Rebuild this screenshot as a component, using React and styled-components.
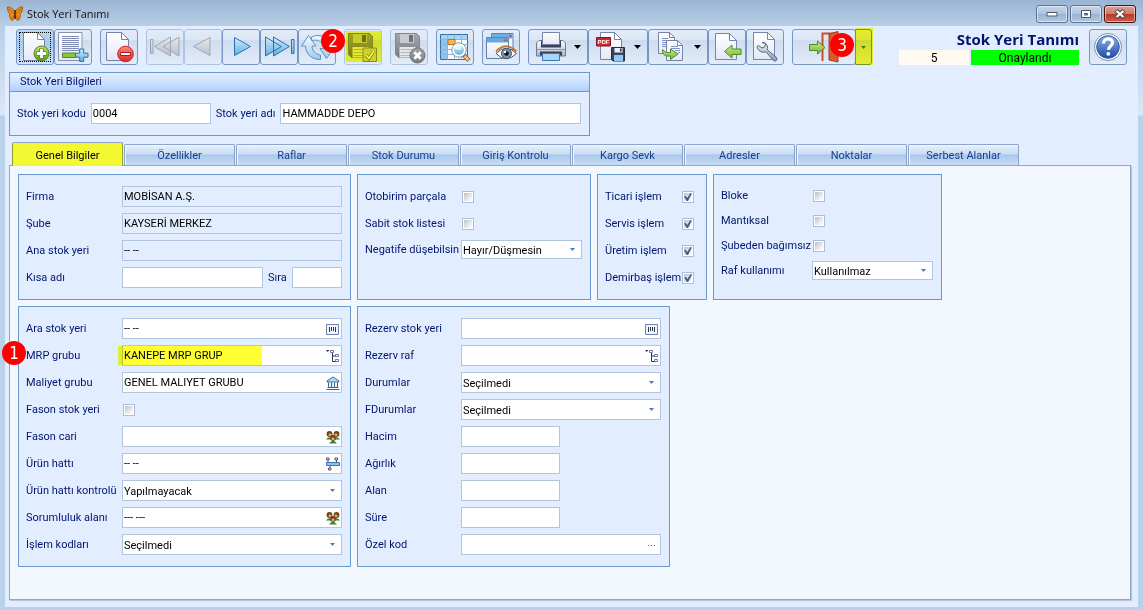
import { useId, useState } from 'react';

import styled, { createGlobalStyle, css } from 'styled-components';

const GlobalStyle = createGlobalStyle`
  * {
    box-sizing: border-box;
  }

  body {
    margin: 0;
    background: #bad1ea;
    color: #000;
    font-family: Roboto, 'DejaVu Sans Condensed', sans-serif;
    font-size: 11px;
    line-height: 14px;
  }

  button,
  input,
  select {
    margin: 0;
    color: inherit;
    font: inherit;
  }
`;

const Window = styled.div`
  display: flex;
  flex-direction: column;
  min-height: 100vh;
  padding: 0 5px 3px;
  background: linear-gradient(#9ab4d2 0, #b9cfe7 26px, #dae7f5 115px, #bad1ea 116px);
`;

const TitleBar = styled.header`
  display: flex;
  align-items: center;
  height: 26px;
  gap: 4px;
  padding: 2px 2px 0;
  color: #101010;
  font-family: 'Open Sans', 'Noto Sans', sans-serif;
`;

const WindowButtons = styled.div`
  display: flex;
  gap: 2px;
  margin-left: auto;
`;

const WindowButton = styled.button`
  display: flex;
  align-items: center;
  justify-content: center;
  width: 32px;
  height: 18px;
  padding: 0;
  border: 1px solid ${(p) => (p.$close ? '#4a1513' : '#5c7391')};
  border-radius: 3px;
  background: ${(p) =>
    p.$close
      ? 'linear-gradient(#dba298 0, #cf7a6c 48%, #b53822 50%, #c8604c 100%)'
      : 'linear-gradient(#c2d4e8 0, #b0c6df 48%, #98b2cf 50%, #b3c9e2 100%)'};
  box-shadow: inset 0 0 0 1px #ffffff80;
`;

const Client = styled.main`
  display: flex;
  flex: 1;
  flex-direction: column;
  align-items: flex-start;
  padding: 3px 7px 7px 4px;
  background: #e2eeff;
`;

const Toolbar = styled.div`
  display: flex;
  align-self: stretch;
  gap: 8px;
  padding: 0 4px 0 7px;
`;

const ToolGroup = styled.div`
  position: relative;
  display: flex;
`;

const ToolButton = styled.button`
  display: flex;
  align-items: center;
  height: 36px;
  padding: 0;
  border: 1px solid #7896c3;
  border-radius: 3px;
  background: linear-gradient(#e3ecf8 0, #dce7f5 28%, #cddcf0 30%, #d9e5f5 70%, #e2edfb 100%);

  svg {
    display: block;
  }

  ${(p) =>
    p.$active &&
    css`
      background: linear-gradient(#bcd6f3, #a9cbee 40%, #cfe2f7);
      outline: 1px dotted #000;
      outline-offset: -4px;
    `}

  &:disabled {
    border-color: #afc3df;
  }
`;

const MenuToolButton = styled(ToolButton)`
  padding-right: 6px;
`;

const SplitButton = styled(ToolButton)`
  justify-content: center;
  width: 17px;
  margin-left: -1px;
  border-radius: 0 3px 3px 0;
`;

const Marker = styled.span`
  position: absolute;
  z-index: 2;
  top: ${(p) => p.$top}px;
  left: ${(p) => p.$left}px;
  width: 24px;
  height: 24px;
  border-radius: 50%;
  background: #fe0000;
  color: #fff;
  font-family: 'DejaVu Sans Condensed', 'DejaVu Sans', sans-serif;
  font-size: 17px;
  line-height: 24px;
  text-align: center;
`;

const Highlight = styled.span`
  position: absolute;
  z-index: 1;
  inset: ${(p) => p.$inset};
  background: #ffff33;
  mix-blend-mode: multiply;
  pointer-events: none;
`;

const Status = styled.div`
  display: grid;
  grid-template-columns: 70px 108px;
  gap: 0 2px;
  margin-left: auto;
  margin-right: 2px;
  font-size: 12px;
  text-align: center;

  h1 {
    grid-column: 1 / -1;
    margin: 0;
    color: #00146e;
    font-family: 'Open Sans', 'Noto Sans', sans-serif;
    font-size: 15px;
    line-height: 21px;
    text-align: right;
  }
`;

const StatusCell = styled.span`
  height: 15px;
  background: ${(p) => p.$color};
  line-height: 16px;
`;

const InfoBox = styled.section`
  width: 581px;
  max-width: 100%;
  margin-top: 7px;
  border: 1px solid #6a98d0;

  h2 {
    margin: 0;
    padding: 0 10px;
    border-bottom: 1px solid #6a98d0;
    background: linear-gradient(#e4efff, #cde1ff 50%, #b0d0fc);
    color: #00146e;
    font-size: 11px;
    font-weight: normal;
    line-height: 18px;
  }
`;

const InfoRow = styled.div`
  display: flex;
  gap: 5px;
  padding: 11px 8px 11px 7px;
  color: #00146e;
  line-height: 21px;

  input {
    flex: 1;
  }

  input:first-of-type {
    flex: 0 0 120px;
  }
`;

const Tabs = styled.div`
  display: flex;
  align-items: flex-end;
  gap: 1px;
  height: 23px;
  margin-top: 6px;
  padding: 0 3px;
`;

const Tab = styled.button`
  position: relative;
  width: 111px;
  height: 21px;
  padding: 2px 0 0;
  border: 1px solid #8da3cb;
  border-bottom: 0;
  border-radius: 2px 2px 0 0;
  background: linear-gradient(#e8f1fc 0, #c9ddf5 45%, #a9c7ec 50%, #c8ddf6 100%);
  box-shadow: inset 1px 1px 0 #f2f7fe;
  color: #153f8c;
  line-height: 16px;

  ${(p) =>
    p.$selected &&
    css`
      height: 24px;
      margin-bottom: -1px;
      background: #f4f8fe;
      color: #000;
    `}
`;

const TabPage = styled.div`
  display: flex;
  flex: 1;
  flex-direction: column;
  align-self: stretch;
  gap: 6px;
  padding: 8px;
  border: 1px solid #90a5cb;
  background: #f3f8ff;
  box-shadow: 1px 1px 1px #b9c6dd;
`;

const PanelRow = styled.div`
  display: flex;
  gap: 6px;
`;

const Panel = styled.section`
  display: flex;
  flex: 0 1 ${(p) => p.$width}px;
  flex-direction: column;
  gap: 6px;
  min-width: 0;
  padding: 11px 8px 11px 7px;
  border: 1px solid #6a98d0;
  background: #e2eeff;
`;

const Row = styled.div`
  position: relative;
  display: flex;
  align-items: center;
  height: ${(p) => (p.$compact ? 19 : 21)}px;
`;

const Label = styled.label`
  flex: 0 0 ${(p) => p.$width}px;
  color: #00146e;
  white-space: nowrap;
`;

const SideLabel = styled(Label)`
  margin-left: 5px;
`;

const Control = styled.div`
  display: flex;
  align-items: center;
  flex: ${(p) => (p.$width ? `0 0 ${p.$width}px` : '1')};
  min-width: 0;
  height: 100%;
  border: 1px solid #b2c5e0;
  background: ${(p) => (p.$readOnly ? 'transparent' : '#fff')};

  input {
    flex: 1;
    min-width: 0;
    height: 100%;
    padding: 0 0 1px 1px;
    border: 0;
    outline: 0;
    background: none;
  }
`;

const TextInput = styled.input`
  min-width: 0;
  height: 21px;
  padding: 0 1px 1px;
  border: 1px solid #b2c5e0;
  background: #fff;
  color: #000;
`;

const LookupButton = styled.button`
  width: 14px;
  height: 14px;
  margin-right: 1px;
  padding: 0;
  border: 0;
  background: none;

  svg {
    display: block;
  }
`;

const SelectBox = styled.div`
  position: relative;
  flex: 1;
  min-width: 0;
  height: 100%;

  select {
    width: 100%;
    height: 100%;
    padding: 2px 18px 0 1px;
    border: 1px solid #b2c5e0;
    border-radius: 0;
    appearance: none;
    background: #fff;
  }

  svg {
    position: absolute;
    top: 50%;
    right: 7px;
    margin-top: -2px;
    pointer-events: none;
  }
`;

const CheckBox = styled.input.attrs({ type: 'checkbox' })`
  display: grid;
  width: 12px;
  height: 12px;
  margin: 1px 1px 0;
  padding: 1px;
  border: 1px solid #a9bfde;
  appearance: none;
  background: linear-gradient(135deg, #bcc1c8, #f7f7f8 80%) content-box, #fff;

  &:checked::after {
    content: '';
    width: 8px;
    height: 8px;
    background: #3e5f94;
    clip-path: polygon(0 45%, 22% 36%, 40% 62%, 78% 4%, 100% 4%, 50% 100%, 34% 100%);
  }
`;

const HiddenDefs = styled.svg`
  position: absolute;
`;

const Caret = ({ small }) => (
  <svg width={small ? 5 : 7} height={small ? 3 : 4} viewBox="0 0 7 4" aria-hidden="true">
    <path d="M0 0h7L3.5 4z" fill={small ? '#4c7ab8' : '#000'} />
  </svg>
);

const gradients = [
  ['gPage', '#ffffff', '#e3e8f5'],
  ['gBlue', '#d3edfb', '#5eaee0'],
  ['gPale', '#f3fafe', '#9ccbec'],
  ['gGrey', '#e6e8ec', '#b9bec9'],
  ['gGreen', '#c4e36a', '#5b9b1e'],
  ['gArrow', '#c9ec86', '#6fb53c'],
  ['gRed', '#ff8a80', '#e02323'],
  ['gHelp', '#8fb4ea', '#1d4aa3'],
  ['gSteel', '#eef1f7', '#8d99b3'],
  ['gPrinter', '#ffffff', '#a9b4cc'],
  ['gDark', '#a3a6ab', '#787b81'],
];

const Gradients = () => (
  <HiddenDefs width="0" height="0" aria-hidden="true">
    <defs>
      {gradients.map(([id, from, to]) => (
        <linearGradient key={id} id={id} x1="0" y1="0" x2="0" y2="1">
          <stop offset="0" stopColor={from} />
          <stop offset="1" stopColor={to} />
        </linearGradient>
      ))}
    </defs>
  </HiddenDefs>
);

// Toolbar drawings use the outer corner of their 38x36 button as origin.
const Icon = ({ width = 36, children }) => (
  <svg width={width} height="34" viewBox={`1 1 ${width} 34`} fill="none" aria-hidden="true">
    {children}
  </svg>
);

const Page = ({ x, y, w, h, fold = 7 }) => (
  <>
    <path
      d={`M${x} ${y}h${w - fold}l${fold} ${fold}v${h - fold}h${-w}z`}
      fill="url(#gPage)"
      stroke="#7782ad"
    />
    <path d={`M${x + w - fold} ${y}v${fold}h${fold}z`} fill="#fff" stroke="#7782ad" />
  </>
);

const Floppy = ({ x, y }) => (
  <g transform={`translate(${x} ${y})`}>
    <path d="M0 0h21l3 3v21H3l-3-3z" fill="url(#gDark)" stroke="#83868c" />
    <path d="M4.5.5h14v9h-14z" fill="#c9cbd0" />
    <path d="M13.5 1.5h4v7h-4z" fill="#6d7076" />
    <path d="M4 13.5h16V24H4z" fill="#e4e6ea" />
    <path d="M5 16h14M5 19h14M5 22h14" stroke="#b4b7bd" />
  </g>
);

const icons = {
  add: (
    <Icon>
      <Page x={7.5} y={3.5} w={21} h={28} />
      <circle cx="25.5" cy="24.5" r="7.5" fill="url(#gGreen)" stroke="#4f8420" />
      <path d="M25.5 19.5v10M20.5 24.5h10" stroke="#4f8420" strokeWidth="4.5" />
      <path d="M25.5 20v9M21 24.5h9" stroke="#fff" strokeWidth="2.8" />
    </Icon>
  ),
  addLine: (
    <Icon>
      <path d="M4.5 3.5h23.5v28H4.5z" fill="url(#gPage)" stroke="#8791b5" />
      <path
        d="M8 7.5h17M8 9.5h17M8 11.5h17M8 13.5h17M8 15.5h17M8 17.5h17M8 19.5h17M8 21.5h17"
        stroke="#7f8bb2"
      />
      <path d="M8.5 24h13v4.5h-13z" fill="#8cc63a" stroke="#55892a" />
      <path
        d="M25.7 20h4v4.2h4.3v4h-4.3v4.2h-4v-4.2h-4.2v-4h4.2z"
        fill="url(#gBlue)"
        stroke="#2d6ea8"
      />
    </Icon>
  ),
  remove: (
    <Icon>
      <Page x={6.5} y={3.5} w={22} h={28} />
      <circle cx="25.5" cy="25" r="7.8" fill="url(#gRed)" stroke="#c42424" />
      <path d="M20.5 23.5h10v3h-10z" fill="#fff" stroke="#b01818" />
    </Icon>
  ),
  first: (
    <Icon>
      <path
        d="M4.5 10.5H7v14H4.5zM24.5 8v19l-16-9.5zM33 8v19l-16-9.5z"
        fill="url(#gGrey)"
        stroke="#9da5b5"
      />
    </Icon>
  ),
  previous: (
    <Icon>
      <path d="M26 8.5v18l-16.5-9z" fill="url(#gGrey)" stroke="#9da5b5" />
    </Icon>
  ),
  next: (
    <Icon>
      <path d="M12.5 8.5v18l16-9z" fill="url(#gBlue)" stroke="#2c6fae" />
    </Icon>
  ),
  last: (
    <Icon>
      <path
        d="M31.5 10.5H34v14h-2.5zM5.5 8v19l16-9.5zM13.5 8v19l16-9.5z"
        fill="url(#gBlue)"
        stroke="#2c6fae"
      />
    </Icon>
  ),
  refresh: (
    <Icon>
      <path
        d="M10.5 6.5L18 17h-4c.2 5 3 8 8.5 9v4.5C13 30.5 8 25 7.500 17h-4z"
        fill="url(#gPale)"
        stroke="#5c93c6"
      />
      <path
        d="M13.500 8C22 4 31.500 8 32 19.500h3.500L28.500 29.500 22 19.500h3.500c0-6-4-9.500-12-8z"
        fill="url(#gPale)"
        stroke="#5c93c6"
      />
    </Icon>
  ),
  save: (
    <Icon>
      <Floppy x={4.5} y={4.5} />
      <path d="M19 19h13.5v13.5H19z" fill="#cfd0d2" stroke="#8b8d92" />
      <path d="M22 26l3 3.5 5-8" stroke="#808287" strokeWidth="3.2" />
      <path d="M22 26l3 3.5 5-8" stroke="#fff" strokeWidth="1.6" />
    </Icon>
  ),
  saveClose: (
    <Icon>
      <Floppy x={5.5} y={4.5} />
      <circle cx="27.5" cy="26.5" r="7.5" fill="url(#gDark)" stroke="#6d7076" />
      <path d="M24.3 23.3l6.4 6.4M30.7 23.3l-6.4 6.4" stroke="#fff" strokeWidth="2.8" />
    </Icon>
  ),
  gridSearch: (
    <Icon>
      <path d="M4.5 5.5h27v25h-27z" fill="#f7fbff" stroke="#336ea5" />
      <path d="M5 6h6v24H5z" fill="#8fc4ec" />
      <path d="M5 6h26v4.5H5z" fill="#a9d3f2" />
      <path
        d="M4.5 10.5h27M4.5 15.5h27M4.5 20.5h27M4.5 25.5h27M11.5 5.5v25M18.5 5.5v25M25.5 5.5v25"
        stroke="#8fb4d9"
      />
      <path d="M12 10.5h7v5h-7z" fill="#fbb94c" stroke="#b9701c" />
      <path d="M27.5 26l5.5 5.5" stroke="#8f6a3a" strokeWidth="4.5" />
      <path d="M28.5 27l4 4" stroke="#f0c08a" strokeWidth="2.5" />
      <circle cx="23" cy="21" r="6" fill="url(#gBlue)" stroke="#fff" strokeWidth="2" />
      <circle cx="23" cy="21" r="7.2" stroke="#8894b0" />
      <ellipse cx="22" cy="18.5" rx="3.5" ry="2.5" fill="#fff" opacity=".7" />
    </Icon>
  ),
  preview: (
    <Icon>
      <path d="M9.5 4.5H31v16H9.5z" fill="#f2f6fd" stroke="#5f82b5" />
      <path d="M10 5h20.5v4.5H10z" fill="#6fb0e4" />
      <path d="M4.5 8.5h22v21h-22z" fill="url(#gPage)" stroke="#5f82b5" />
      <path d="M5 9h21v4.5H5z" fill="#64a9e0" />
      <path d="M27.5 6h2v2h-2zM22.5 10.3h2v2h-2z" fill="#e23b3b" />
      <path d="M14 24.5Q24 14 34.5 24.5 24 35 14 24.5z" fill="#fff" stroke="#57504d" />
      <circle cx="24.5" cy="24.5" r="5" fill="#7d93ad" stroke="#46566b" />
      <circle cx="24.5" cy="24.5" r="2.3" fill="#111" />
      <circle cx="23" cy="23" r="1.2" fill="#fff" />
      <path d="M14 22.5Q24 12 34.5 22.5" stroke="#bb7a43" strokeWidth="1.8" />
    </Icon>
  ),
  print: (
    <Icon width={45}>
      <path d="M8.5 14l2.5-2.5h24l2.5 2.5v13h-29z" fill="url(#gPrinter)" stroke="#6b789a" />
      <path d="M13 11.5h20v7H13z" fill="#3b4257" />
      <path d="M14.5 3.5h17v12h-17z" fill="url(#gPage)" stroke="#7782ad" />
      <path d="M9 20.5h28" stroke="#8b96b3" />
      <path d="M12 22.5h22v4H12z" fill="#3b4257" />
      <path d="M14.5 24.5h17v7h-17z" fill="#a8d5f5" stroke="#3779b5" />
    </Icon>
  ),
  pdf: (
    <Icon width={45}>
      <Page x={12.5} y={3.5} w={21} h={27} />
      <path d="M8.5 8.5h14V17h-14z" fill="#d3252c" stroke="#8e1319" />
      <text
        x="15.5"
        y="15"
        fill="#fff"
        fontFamily="Liberation Sans, sans-serif"
        fontSize="6"
        fontWeight="bold"
        textAnchor="middle"
      >
        PDF
      </text>
      <path d="M23.5 18.5h13V32H25l-1.5-1.5z" fill="#39445e" stroke="#222b42" />
      <path d="M26.5 19h8v4.5h-8z" fill="#e9edf5" />
      <path d="M32 19.5h1.5v3H32z" fill="#222b42" />
      <path d="M26 26h9v6h-9z" fill="#8fcaf3" />
    </Icon>
  ),
  copy: (
    <Icon width={45}>
      <Page x={10.5} y={3.5} w={16} h={21} fold={5} />
      <path d="M14 9.5h6M14 11.5h6M14 13.5h6M14 15.5h6M14 17.5h6" stroke="#7e93c4" />
      <Page x={18.5} y={11.5} w={16} h={20} fold={5} />
      <path d="M23 17.5h7M23 19.5h9M27 21.5h5M30 23.5h2" stroke="#7e93c4" />
      <path
        d="M14.5 20.5c0 6 3 7 8 6.5v3.5l7.5-5.500-7.500-5v3.500c-4 .5-6-.5-8-3z"
        fill="url(#gArrow)"
        stroke="#4f8a22"
      />
    </Icon>
  ),
  load: (
    <Icon>
      <Page x={7.5} y={4.5} w={21} h={26} />
      <path d="M16.5 22.5L24 16v4h9v5.5h-9V29z" fill="url(#gArrow)" stroke="#4f8a22" />
    </Icon>
  ),
  settings: (
    <Icon>
      <Page x={7.5} y={3.5} w={21} h={27} />
      <path
        d="M16 13.5c4 0 6.5 3.5 5.2 7.3l9.3 7.7c1.5 2.5-1 4.5-3 3L20 22.800c-4 1.500-8.500-1-9-5.300l1.500-1 3.500 2.500 3-1.500.5-3z"
        fill="url(#gSteel)"
        stroke="#57627f"
      />
    </Icon>
  ),
  exit: (
    <Icon width={62}>
      <path d="M30.5 32V4.5H44" stroke="#c9502b" strokeWidth="2" />
      <path d="M37 5l9-2.5V33l-9-2z" fill="#d95a30" stroke="#a83c1b" />
      <path
        d="M17.5 15.5h8V12l7.5 6.5-7.5 6.5v-3.5h-8z"
        fill="url(#gArrow)"
        stroke="#4f8a22"
      />
    </Icon>
  ),
  help: (
    <Icon>
      <circle cx="19" cy="18" r="13.5" fill="#fff" stroke="#7c8cad" />
      <circle cx="19" cy="18" r="11.3" fill="url(#gHelp)" stroke="#2e57a6" />
      <path d="M14.5 14.5c0-6 9-6 9-.8 0 3.300-4 3.300-4 7" stroke="#fff" strokeWidth="3.2" />
      <circle cx="19.3" cy="24.8" r="1.9" fill="#fff" />
    </Icon>
  ),
};

const SmallIcon = ({ children }) => (
  <svg width="14" height="14" viewBox="0 0 14 14" fill="none" aria-hidden="true">
    {children}
  </svg>
);

const lookupIcons = {
  barcode: (
    <SmallIcon>
      <path d="M.5 2.5h12v10H.5z" fill="#f4f6fc" stroke="#6f7fae" />
      <path d="M3.5 5v5M5.5 5v4M7.5 5v4M9.5 5v5" stroke="#2c3450" />
    </SmallIcon>
  ),
  tree: (
    <SmallIcon>
      <path d="M0 1h3.5L1.7 3z" fill="#2c3450" />
      <path d="M6.5 4v8.5H10M6.5 7H10" stroke="#2c3450" />
      <path d="M4.500 1.500h3v2h-3zM9.500 5.500h3v2h-3zM9.500 10.500h3v2h-3z" fill="#fff" stroke="#6878a8" />
    </SmallIcon>
  ),
  bank: (
    <SmallIcon>
      <path d="M7 1l6 4v1H1V5z" fill="#bcd8f0" stroke="#356a9c" />
      <path d="M2.5 6.5v5M5.5 6.5v5M8.5 6.5v5M11.5 6.5v5" stroke="#356a9c" />
      <path d="M4 6.5v5M7 6.5v5M10 6.5v5" stroke="#d6e7f6" />
      <path d="M1.5 11.5h11M.5 13.5h13" stroke="#356a9c" />
    </SmallIcon>
  ),
  people: (
    <SmallIcon>
      <path d="M0 9.5Q3.5 5 7 9.5zM7 9.5Q10.5 5 14 9.5z" fill="#2f8a2c" />
      <circle cx="3.5" cy="4" r="2.9" fill="#6d4318" />
      <circle cx="10.5" cy="4" r="2.9" fill="#6d4318" />
      <circle cx="4" cy="4.7" r="1.5" fill="#dfab70" />
      <circle cx="10" cy="4.7" r="1.5" fill="#dfab70" />
      <path d="M3 13.5Q7 8 11 13.5z" fill="#2f8a2c" />
      <circle cx="7" cy="8" r="2.9" fill="#6d4318" />
      <circle cx="7" cy="8.8" r="1.5" fill="#dfab70" />
    </SmallIcon>
  ),
  conveyor: (
    <SmallIcon>
      <path d="M.5 5.5h13v3H.5z" fill="#8cc4ee" stroke="#3a76b0" />
      <path d="M2 3v2.5M10.500 3v2.500M4 8.500V11" stroke="#4b5676" />
      <path d="M.5 1H3v2H.5zM9 1h2.500v2H9zM2.500 11H5v2H2.500z" fill="#fff" stroke="#4b5676" />
    </SmallIcon>
  ),
  dots: (
    <SmallIcon>
      <path d="M3 7.5h1M6 7.5h1M9 7.5h1" stroke="#3f70ad" />
    </SmallIcon>
  ),
};

const TextRow = ({ label, value = '', icon, readOnly, width, labelWidth = 96, children }) => {
  const id = useId();

  return (
    <Row>
      <Label htmlFor={id} $width={labelWidth}>
        {label}
      </Label>
      <Control $readOnly={readOnly} $width={width}>
        <input id={id} type="text" defaultValue={value} readOnly={readOnly} />
        {icon && (
          <LookupButton type="button" aria-label={label}>
            {lookupIcons[icon]}
          </LookupButton>
        )}
      </Control>
      {children}
    </Row>
  );
};

const SelectRow = ({ label, value, labelWidth = 96, compact }) => {
  const id = useId();

  return (
    <Row $compact={compact}>
      <Label htmlFor={id} $width={labelWidth}>
        {label}
      </Label>
      <SelectBox>
        <select id={id} defaultValue={value}>
          <option>{value}</option>
        </select>
        <Caret small />
      </SelectBox>
    </Row>
  );
};

const CheckRow = ({ label, checked = false, labelWidth = 96, compact }) => {
  const id = useId();

  return (
    <Row $compact={compact}>
      <Label htmlFor={id} $width={labelWidth}>
        {label}
      </Label>
      <CheckBox id={id} defaultChecked={checked} />
    </Row>
  );
};

const Tool = ({ icon, label, menu, ...rest }) => {
  const Button = menu ? MenuToolButton : ToolButton;

  return (
    <Button type="button" aria-label={label} {...rest}>
      {icons[icon]}
      {menu && <Caret />}
    </Button>
  );
};

const tabNames = [
  'Genel Bilgiler',
  'Özellikler',
  'Raflar',
  'Stok Durumu',
  'Giriş Kontrolu',
  'Kargo Sevk',
  'Adresler',
  'Noktalar',
  'Serbest Alanlar',
];

const App = () => {
  const [tab, setTab] = useState(tabNames[0]);

  return (
    <Window>
      <GlobalStyle />
      <Gradients />
      <TitleBar>
        <svg width="16" height="16" viewBox="0 0 16 16" aria-hidden="true">
          <path
            d="M8 6C6 2.500 3 .5.500 1c0 3 .8 5.500 2.500 7-.8 2.500.2 5 2 6.500C6.500 14 7.500 12 8 9.500c.5 2.500 1.500 4.500 3 5 1.800-1.500 2.800-4 2-6.500 1.700-1.500 2.500-4 2.500-7C13 .5 10 2.500 8 6z"
            fill="#f08c14"
            stroke="#a5560c"
          />
          <path d="M2 2.5L7 8M14 2.5L9 8M4.5 12.5L7.5 9M11.5 12.5L8.5 9" stroke="#b85f0c" />
          <path d="M8 4v9" stroke="#3c2410" strokeWidth="1.5" />
        </svg>
        Stok Yeri Tanımı
        <WindowButtons>
          <WindowButton type="button" aria-label="Simge durumuna küçült">
            <svg width="12" height="6" aria-hidden="true">
              <path d="M1 1.500h10v3.500H1z" fill="#fff" stroke="#4e5a6b" />
            </svg>
          </WindowButton>
          <WindowButton type="button" aria-label="Ekranı kapla">
            <svg width="12" height="10" aria-hidden="true">
              <path d="M1.5 1.5h9v7h-9z" fill="#fff" stroke="#4e5a6b" />
              <path d="M4.5 4.5h3V6h-3z" fill="#9db4cf" stroke="#4e5a6b" />
            </svg>
          </WindowButton>
          <WindowButton type="button" aria-label="Kapat" $close>
            <svg width="12" height="10" aria-hidden="true">
              <path d="M2 1.5l8 7M10 1.5l-8 7" stroke="#4b4347" strokeWidth="4" />
              <path d="M2.5 2l7 6M9.5 2l-7 6" stroke="#fff" strokeWidth="2.2" />
            </svg>
          </WindowButton>
        </WindowButtons>
      </TitleBar>

      <Client>
        <Toolbar>
          <ToolGroup>
            <Tool icon="add" label="Yeni" $active />
            <Tool icon="addLine" label="Satır ekle" />
          </ToolGroup>
          <Tool icon="remove" label="Sil" />
          <ToolGroup>
            <Tool icon="first" label="İlk" disabled />
            <Tool icon="previous" label="Önceki" disabled />
            <Tool icon="next" label="Sonraki" />
            <Tool icon="last" label="Son" />
            <Tool icon="refresh" label="Yenile" />
          </ToolGroup>
          <ToolGroup>
            <Tool icon="save" label="Kaydet" disabled />
            <Highlight $inset="2px 1px 3px 2px" />
            <Marker $top={0} $left={-23}>2</Marker>
          </ToolGroup>
          <Tool icon="saveClose" label="Vazgeç" disabled />
          <Tool icon="gridSearch" label="Listele" />
          <Tool icon="preview" label="Önizle" />
          <ToolGroup>
            <Tool icon="print" label="Yazdır" menu />
            <Tool icon="pdf" label="PDF kaydet" menu />
            <Tool icon="copy" label="Kopyala" menu />
            <Tool icon="load" label="Al" />
            <Tool icon="settings" label="Ayarlar" />
          </ToolGroup>
          <ToolGroup>
            <Tool icon="exit" label="Çıkış" />
            <SplitButton type="button" aria-label="Çıkış seçenekleri">
              <Caret small />
            </SplitButton>
            <Highlight $inset="-1px -1px 0 63px" />
            <Marker $top={4} $left={38}>3</Marker>
          </ToolGroup>
          <Status>
            <h1>Stok Yeri Tanımı</h1>
            <StatusCell $color="#fffaf0">5</StatusCell>
            <StatusCell $color="#00ff00">Onaylandı</StatusCell>
          </Status>
          <Tool icon="help" label="Yardım" />
        </Toolbar>

        <InfoBox>
          <h2>Stok Yeri Bilgileri</h2>
          <InfoRow>
            <label htmlFor="kod">Stok yeri kodu</label>
            <TextInput id="kod" defaultValue="0004" />
            <label htmlFor="ad">Stok yeri adı</label>
            <TextInput id="ad" defaultValue="HAMMADDE DEPO" />
          </InfoRow>
        </InfoBox>

        <Tabs role="tablist">
          {tabNames.map((name) => (
            <Tab
              key={name}
              type="button"
              role="tab"
              aria-selected={name === tab}
              $selected={name === tab}
              onClick={() => setTab(name)}
            >
              {name}
              {name === tabNames[0] && <Highlight $inset="0 -1px 0 -1px" />}
            </Tab>
          ))}
        </Tabs>

        <TabPage role="tabpanel">
          <PanelRow>
            <Panel $width={333}>
              <TextRow label="Firma" value="MOBİSAN A.Ş." readOnly />
              <TextRow label="Şube" value="KAYSERİ MERKEZ" readOnly />
              <TextRow label="Ana stok yeri" value="-- --" readOnly />
              <TextRow label="Kısa adı">
                <SideLabel htmlFor="sira" $width={24}>
                  Sıra
                </SideLabel>
                <Control $width={50}>
                  <input id="sira" type="text" />
                </Control>
              </TextRow>
            </Panel>
            <Panel $width={234}>
              <CheckRow label="Otobirim parçala" />
              <CheckRow label="Sabit stok listesi" />
              <SelectRow label="Negatife düşebilsin" value="Hayır/Düşmesin" compact />
            </Panel>
            <Panel $width={110}>
              <CheckRow label="Ticari işlem" labelWidth={76} checked />
              <CheckRow label="Servis işlem" labelWidth={76} checked />
              <CheckRow label="Üretim işlem" labelWidth={76} checked />
              <CheckRow label="Demirbaş işlem" labelWidth={76} checked />
            </Panel>
            <Panel $width={229}>
              <CheckRow label="Bloke" labelWidth={91} compact />
              <CheckRow label="Mantıksal" labelWidth={91} compact />
              <CheckRow label="Şubeden bağımsız" labelWidth={91} compact />
              <SelectRow label="Raf kullanımı" value="Kullanılmaz" labelWidth={91} compact />
            </Panel>
          </PanelRow>

          <PanelRow>
            <Panel $width={333}>
              <TextRow label="Ara stok yeri" value="-- --" icon="barcode" />
              <TextRow label="MRP grubu" value="KANEPE MRP GRUP" icon="tree">
                <Highlight $inset="1px 80px 1px 92px" />
                <Marker $top={-4} $left={-24}>1</Marker>
              </TextRow>
              <TextRow label="Maliyet grubu" value="GENEL MALIYET GRUBU" icon="bank" />
              <CheckRow label="Fason stok yeri" />
              <TextRow label="Fason cari" icon="people" />
              <TextRow label="Ürün hattı" value="-- --" icon="conveyor" />
              <SelectRow label="Ürün hattı kontrolü" value="Yapılmayacak" />
              <TextRow label="Sorumluluk alanı" value="--- ---" icon="people" />
              <SelectRow label="İşlem kodları" value="Seçilmedi" />
            </Panel>
            <Panel $width={313}>
              <TextRow label="Rezerv stok yeri" icon="barcode" />
              <TextRow label="Rezerv raf" icon="tree" />
              <SelectRow label="Durumlar" value="Seçilmedi" />
              <SelectRow label="FDurumlar" value="Seçilmedi" />
              <TextRow label="Hacim" width={99} />
              <TextRow label="Ağırlık" width={99} />
              <TextRow label="Alan" width={99} />
              <TextRow label="Süre" width={99} />
              <TextRow label="Özel kod" icon="dots" />
            </Panel>
          </PanelRow>
        </TabPage>
      </Client>
    </Window>
  );
};

export default App;
